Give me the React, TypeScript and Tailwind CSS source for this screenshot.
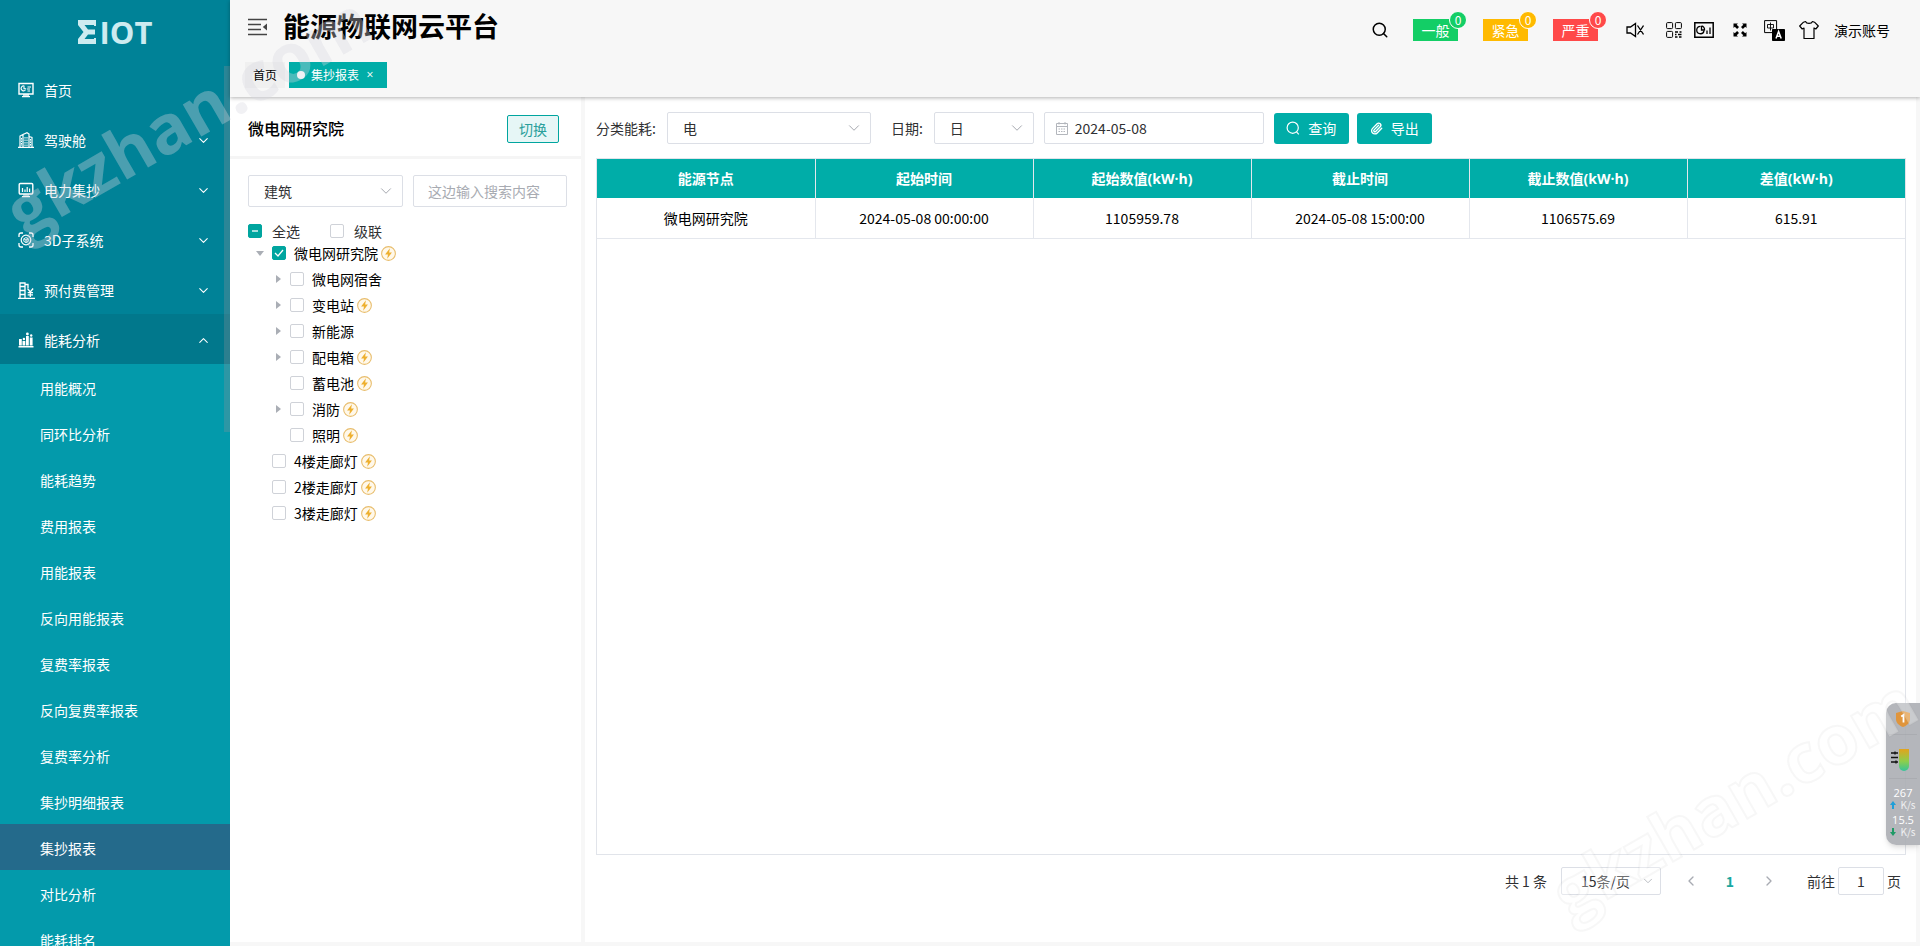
import type { ReactNode } from 'react';
import { ChevronDown, ChevronLeft, ChevronRight, ChevronUp, Paperclip, Search } from 'lucide-react';

const subMenus = [
  '用能概况',
  '同环比分析',
  '能耗趋势',
  '费用报表',
  '用能报表',
  '反向用能报表',
  '复费率报表',
  '反向复费率报表',
  '复费率分析',
  '集抄明细报表',
  '集抄报表',
  '对比分析',
  '能耗排名',
];

const treeNodes = [
  { label: '微电网研究院', level: 0, arrow: 'open', power: true, checked: true },
  { label: '微电网宿舍', level: 1, arrow: 'closed', power: false },
  { label: '变电站', level: 1, arrow: 'closed', power: true },
  { label: '新能源', level: 1, arrow: 'closed', power: false },
  { label: '配电箱', level: 1, arrow: 'closed', power: true },
  { label: '蓄电池', level: 1, power: true },
  { label: '消防', level: 1, arrow: 'closed', power: true },
  { label: '照明', level: 1, power: true },
  { label: '4楼走廊灯', level: 0, power: true },
  { label: '2楼走廊灯', level: 0, power: true },
  { label: '3楼走廊灯', level: 0, power: true },
];

const columns = ['能源节点', '起始时间', '起始数值(kW·h)', '截止时间', '截止数值(kW·h)', '差值(kW·h)'];
const rows = [['微电网研究院', '2024-05-08 00:00:00', '1105959.78', '2024-05-08 15:00:00', '1106575.69', '615.91']];

const HomeIcon = () => (
  <svg className="h-4 w-4" viewBox="0 0 16 16" fill="none" stroke="currentColor">
    <path d="M1 1.5h14v10.5H1z" strokeWidth="1.4" />
    <path d="M6.5 4.2a2.4 2.4 0 1 0 1 3.6M6 4v2.8h2.2M9.5 5H13M9 7h3M9.5 9H12" strokeWidth="1.1" />
    <path d="M5 13h6M4 14.7h8" strokeWidth="1.3" />
  </svg>
);

const BuildingIcon = () => (
  <svg className="h-4 w-4" viewBox="0 0 16 16" fill="none" stroke="currentColor">
    <path d="M0 15.4h16M2 15V4l3-1.5V15M5 2.5 9 .7l2 1.3v13M11 4.5l3 1V15" strokeWidth="1.2" />
    <path d="M7 5v9M9 5v9M12.5 7v7M3.5 6v8" strokeWidth="1" strokeDasharray="1.6 .9" />
  </svg>
);

const MeterIcon = () => (
  <svg className="h-4 w-4" viewBox="0 0 16 16" fill="none" stroke="currentColor">
    <rect x="1.2" y="1.5" width="13.6" height="10.5" rx="1.2" strokeWidth="1.4" />
    <path d="M4.5 10V6M7 10V7.5M9.2 10V5M11.6 10V6.5" strokeWidth="1.2" />
    <path d="M5 13h6M4 14.7h8" strokeWidth="1.2" />
  </svg>
);

const CubeIcon = () => (
  <svg className="h-4 w-4" viewBox="0 0 16 16" fill="none" stroke="currentColor">
    <path d="M5 1H3a2 2 0 0 0-2 2v2M11 1h2a2 2 0 0 1 2 2v2M1 11v2a2 2 0 0 0 2 2h2M15 11v2a2 2 0 0 1-2 2h-2" strokeWidth="1.3" />
    <circle cx="8" cy="8" r="4.8" strokeWidth="1.2" />
    <path d="M8 5.5 10.2 6.8v2.5L8 10.6 5.8 9.300V6.800zM5.800 6.800 8 8l2.200-1.200M8 8v2.600" strokeWidth=".9" />
  </svg>
);

const PrepayIcon = () => (
  <svg className="h-[17px] w-[17px]" viewBox="0 0 17 17" fill="none" stroke="currentColor">
    <path d="M0 16.3h17M2 16V1h5v15M2 4.5h5M2 8.5h5M2 12.5h5M7 2.5h3V6" strokeWidth="1.3" />
    <path d="m9.5 6.5 2.8 3.5 2.8-3.5M12.3 10v5M9.7 10.7H15M9.7 12.9H15" strokeWidth="1.3" />
  </svg>
);

const AnalysisIcon = () => (
  <svg className="h-4 w-4" viewBox="0 0 16 16" fill="currentColor">
    <path d="M1 7h2.8v6.500H1zM4.500 9h2.800v4.500H4.500zM8 4h2.800v9.500H8zM11.800 5.500h2.800v8h-2.800zM.5 14h15v1.500H.5z" />
    <circle cx="9.400" cy="2" r="1.400" />
    <circle cx="5.900" cy="7" r="1.200" />
    <circle cx="13.200" cy="3.500" r="1.200" />
  </svg>
);

const menus = [
  { label: '首页', icon: <HomeIcon /> },
  { label: '驾驶舱', icon: <BuildingIcon />, children: true },
  { label: '电力集抄', icon: <MeterIcon />, children: true },
  { label: '3D子系统', icon: <CubeIcon />, children: true },
  { label: '预付费管理', icon: <PrepayIcon />, children: true },
  { label: '能耗分析', icon: <AnalysisIcon />, children: true, open: true },
];

const Logo = () => (
  <div className="flex h-16 items-center justify-center text-[#cdebf0]">
    <svg className="h-6 w-[18px]" viewBox="0 0 18 24" fill="currentColor">
      <path d="M0 0h18v6h-2V5H6.500L10 9.500h7v5h-7L6.500 19H16v-1h2v6H0v-5l5.500-7L0 5z" />
    </svg>
    <span className="ml-1 font-['Open_Sans',sans-serif] text-[31px] leading-8 font-bold">IOT</span>
  </div>
);

const Sidebar = () => (
  <aside className="relative w-[230px] shrink-0 overflow-hidden bg-[#039aab] text-white">
    <div className="bg-[#008297]">
      <Logo />
      <nav>
        {menus.map((m) => (
          <button
            key={m.label}
            className={`flex h-[50px] w-full items-center pt-0.5 pr-[19px] pl-[18px] text-left ${m.open ? 'bg-[#01788c]' : ''}`}
          >
            <span className="w-[26px]">{m.icon}</span>
            <span className="flex-1">{m.label}</span>
            {m.children && (m.open ? <ChevronUp size={15} strokeWidth={1.7} /> : <ChevronDown size={15} strokeWidth={1.7} />)}
          </button>
        ))}
      </nav>
    </div>
    <ul>
      {subMenus.map((s) => (
        <li key={s}>
          <a href="#" className={`flex h-[46px] items-center pt-0.5 pl-10 ${s === '集抄报表' ? 'bg-[#246a8b]' : ''}`}>
            {s}
          </a>
        </li>
      ))}
    </ul>
    {/* scroll thumb */}
    <div className="absolute top-[66px] right-0 h-[366px] w-1.5 bg-[#909399]/30" />
  </aside>
);

const alarms = [
  { label: '一般', color: 'bg-[#13ce66]' },
  { label: '紧急', color: 'bg-[#ffba00]' },
  { label: '严重', color: 'bg-[#ff4949]' },
];

const HeaderTools = () => (
  <div className="flex items-center pt-1.5 pr-[30px] text-black">
    <button aria-label="搜索">
      <Search size={18} strokeWidth={2} />
    </button>
    <div className="mr-7 ml-6 flex gap-[25px]">
      {alarms.map((a) => (
        <button key={a.label} className={`relative h-[22px] w-[45px] leading-5 text-white ${a.color}`}>
          {a.label}
          <span
            className={`absolute -top-2 -right-[9px] h-[18px] w-[18px] rounded-full border border-white text-xs leading-[15px] ${a.color}`}
          >
            0
          </span>
        </button>
      ))}
    </div>
    <button aria-label="静音" className="mr-[22px]">
      <svg className="h-[18px] w-[18px]" viewBox="0 0 18 18" fill="none" stroke="currentColor" strokeWidth="1.3">
        <path d="M1 6h3.500L9.500 2.500v13L4.500 12H1zM11.500 4.500l6 9M17.500 4.500l-6 9" />
      </svg>
    </button>
    <button aria-label="二维码" className="mr-3">
      <svg className="h-4 w-4" viewBox="0 0 16 16" fill="none" stroke="currentColor">
        <rect x=".6" y=".6" width="6" height="6" rx="1" />
        <rect x="9.400" y=".6" width="6" height="6" rx="1" />
        <rect x=".6" y="9.400" width="6" height="6" rx="1" />
        <path d="M9 10h3M13.500 10h2M9 12.500h1.500M12 12.500h3.500M9 15h2.500M13 15h2.500" strokeWidth="1.400" />
      </svg>
    </button>
    <button aria-label="数据大屏" className="mr-[19px]">
      <svg className="h-4 w-5" viewBox="0 0 20 16" fill="none" stroke="currentColor">
        <path d="M.8.8h18.400v14.400H.8z" strokeWidth="1.500" />
        <path d="M6.500 4.300A3.700 3.700 0 1 0 10 9M7.500 4v4h3a3.500 3.500 0 0 0-3-4M13 12V8.500M16 12V5.500" strokeWidth="1.300" />
      </svg>
    </button>
    <button aria-label="全屏" className="mr-[17px]">
      <svg className="h-3.5 w-3.5" viewBox="0 0 14 14" fill="currentColor">
        <path d="M.5.5H5L3.700 1.800 6 4.100 4.100 6 1.800 3.700.5 5zM13.500.5v4.500l-1.300-1.300L9.900 6 8 4.100l2.300-2.300L9 .5zM.5 13.500V9l1.300 1.300L4.100 8 6 9.900l-2.300 2.300L5 13.500zM13.500 13.500H9l1.300-1.300L8 9.900 9.900 8l2.300 2.300L13.500 9z" />
      </svg>
    </button>
    <button aria-label="语言" className="mr-3.5">
      <svg className="h-[21px] w-[21px]" viewBox="0 0 21 21" fill="none" stroke="currentColor">
        <path d="M.6.6h12v12H.6z" />
        <path d="M3.500 4.500h6v3.500h-6zM6.500 2.500v8" strokeWidth=".9" />
        <path d="M8.500 9.500h12v11h-12z" fill="currentColor" />
        <path d="m12 18.500 2.600-7 2.600 7M13 16.300h3.300" stroke="#fff" strokeWidth="1.500" />
      </svg>
    </button>
    <button aria-label="主题" className="mr-[15px]">
      <svg className="h-5 w-5" viewBox="0 0 20 20" fill="none" stroke="currentColor" strokeWidth="1.200" strokeLinejoin="round">
        <path d="M6.500 1.500C7.500 4 12.500 4 13.500 1.500l2 .7L19.300 6 16.800 9 15 8v10.500H5V8L3.200 9 .7 6l3.800-3.800z" />
      </svg>
    </button>
    <button>演示账号</button>
  </div>
);

const Header = () => (
  <header className="relative z-10 h-[97px] shrink-0 bg-[#f7f7f7] shadow-[0_1px_4px_rgba(0,0,0,0.3)]">
    <div className="flex h-[54px] items-center justify-between pl-[18px]">
      <div className="flex items-center">
        <button aria-label="收起菜单">
          <svg className="h-[18px] w-5" viewBox="0 0 20 18" fill="none" stroke="#444" strokeWidth="1.600">
            <path d="M0 1.500h19M0 6.500h13M0 11.500h13M0 16.500h19" />
            <path d="M19 5.500v7L14.800 9z" fill="#444" stroke="none" />
          </svg>
        </button>
        <h1 className="ml-[15px] pb-0.5 text-[27px] leading-[52px] font-bold text-black">能源物联网云平台</h1>
      </div>
      <HeaderTools />
    </div>
    <div className="flex gap-1 pt-2 pl-[15px] text-xs">
      <a href="#" className="flex h-[26px] items-center bg-[#f0f0f0] px-2 text-black">
        首页
      </a>
      <a href="#" className="flex h-[26px] items-center bg-[#00ada8] pr-1.5 pl-2 text-white">
        <span className="mr-1.5 h-2 w-2 rounded-full bg-white" />
        集抄报表
        <span className="w-[22px] text-center font-['Open_Sans',sans-serif]">×</span>
      </a>
    </div>
  </header>
);

const SelectBox = ({ label, value, className }: { label: string; value: string; className: string }) => (
  <div className={`relative ${className}`}>
    <select
      aria-label={label}
      defaultValue={value}
      className="h-full w-full appearance-none rounded-[2px] border border-[#dcdfe6] bg-white pl-[15px] outline-none"
    >
      <option>{value}</option>
    </select>
    <ChevronDown size={18} strokeWidth={1.3} className="pointer-events-none absolute inset-y-0 right-2 my-auto text-[#a3a6ad]" />
  </div>
);

const CheckItem = ({
  children,
  checked,
  partial,
}: {
  children: ReactNode;
  checked?: boolean;
  partial?: boolean;
}) => (
  <label className="flex items-center">
    <span className="relative mr-2 h-3.5 w-3.5">
      <input
        type="checkbox"
        defaultChecked={checked}
        className="peer block h-3.5 w-3.5 appearance-none rounded-[2px] border border-[#cfd2d8] bg-white checked:border-[#00a59f] checked:bg-[#00a59f]"
      />
      <svg
        className="pointer-events-none absolute inset-0 hidden h-3.5 w-3.5 peer-checked:block"
        viewBox="0 0 14 14"
        fill="none"
        stroke="#fff"
        strokeWidth="1.300"
      >
        <path d={partial ? 'M4 7h6' : 'm3 7 3 3 5-6'} />
      </svg>
    </span>
    {children}
  </label>
);

const PowerIcon = () => (
  <svg className="ml-[3px] h-[15px] w-[15px]" viewBox="0 0 14 14">
    <circle cx="7" cy="7" r="6.400" fill="#fff8ea" stroke="#e8bd6c" />
    <path d="M8.300 2.200 3.800 8h2.700L5.800 12 10.200 6H7.600z" fill="#eeb030" />
  </svg>
);

const TreePanel = () => (
  <section className="w-[351px] shrink-0 bg-white">
    <div className="flex h-[62px] items-center justify-between border-b-[3px] border-[#f5f5f5] pr-[22px] pl-[18px]">
      <h2 className="pt-0.5 text-base font-medium text-black">微电网研究院</h2>
      <button className="mt-1 h-7 w-[52px] rounded-[2px] border border-[#00a59f] bg-[#e6f6f6] text-[#2a9f9b]">切换</button>
    </div>
    <div className="flex gap-2.5 pt-4 pr-3.5 pl-[18px]">
      <SelectBox label="类型" value="建筑" className="h-8 flex-1" />
      <input
        aria-label="搜索"
        placeholder="这边输入搜索内容"
        className="h-8 w-[154px] rounded-[2px] border border-[#dcdfe6] px-3.5 outline-none placeholder:text-[#a8abb2]"
      />
    </div>
    <div className="mt-3.5 flex h-5 items-center gap-[30px] pl-[18px]">
      <CheckItem checked partial>
        <span className="ml-0.5">全选</span>
      </CheckItem>
      <CheckItem>
        <span className="ml-0.5">级联</span>
      </CheckItem>
    </div>
    <ul className="-mt-px pl-6">
      {treeNodes.map((n) => (
        <li key={n.label} className={`flex h-[26px] items-center text-black ${n.level ? 'pl-[18px]' : ''}`}>
          <span className="w-[18px]">
            {n.arrow && (
              <svg className={`ml-0.5 h-2 w-2 ${n.arrow === 'open' ? 'rotate-90' : ''}`} viewBox="0 0 8 8" fill="#aaaeb5">
                <path d="M2 0l5 4-5 4z" />
              </svg>
            )}
          </span>
          <CheckItem checked={n.checked}>
            {n.label}
            {n.power && <PowerIcon />}
          </CheckItem>
        </li>
      ))}
    </ul>
  </section>
);

const FilterBar = () => (
  <div className="flex items-center">
    <span className="mr-[11px]">分类能耗:</span>
    <SelectBox label="分类能耗" value="电" className="h-8 w-[204px]" />
    <span className="mr-[11px] ml-5">日期:</span>
    <SelectBox label="日期" value="日" className="h-8 w-[100px]" />
    <div className="relative mr-2.5 ml-2.5 h-8 w-[220px]">
      <input
        aria-label="选择日期"
        defaultValue="2024-05-08"
        className="h-full w-full rounded-[2px] border border-[#dcdfe6] pl-[30px] outline-none"
      />
      <svg
        className="absolute inset-y-0 left-3 my-auto h-[13px] w-3"
        viewBox="0 0 12 13"
        fill="none"
        stroke="#b3b6bc"
      >
        <path d="M.5 1.500h11v11H.5zM.5 4.500h11M3 0v2.500M9 0v2.500" />
        <path d="M2.500 7h7M2.500 9.500h7" strokeDasharray="1.500 1" />
      </svg>
    </div>
    <button className="mr-2 flex h-[31px] w-[75px] items-center justify-center gap-2 rounded-[3px] bg-[#00ada8] text-white">
      <svg className="h-3.5 w-3.5" viewBox="0 0 14 14" fill="none" stroke="currentColor" strokeWidth="1.200">
        <circle cx="6.700" cy="6.700" r="5.600" />
        <path d="m10.500 10.800 2.300 2.500" />
      </svg>
      查询
    </button>
    <button className="flex h-[31px] w-[75px] items-center justify-center gap-2 rounded-[3px] bg-[#00ada8] text-white">
      <Paperclip size={13} strokeWidth={2.5} />
      导出
    </button>
  </div>
);

const Pagination = () => (
  <div className="flex h-[52px] items-center justify-end pr-[5px]">
    <span className="mr-3.5">共 1 条</span>
    <div className="relative h-7 w-[100px]">
      <select
        aria-label="每页条数"
        className="h-full w-full appearance-none rounded-[2px] border border-[#dcdfe6] bg-white pl-[19px] outline-none"
      >
        <option>15条/页</option>
      </select>
      <ChevronDown size={14} strokeWidth={1.500} className="pointer-events-none absolute inset-y-0 right-1.5 my-auto text-[#b0b3ba]" />
    </div>
    <button aria-label="上一页" className="ml-[22px] text-[#a8abb2]">
      <ChevronLeft size={16} />
    </button>
    <button className="w-[62px] font-bold text-[#1aa79f]">1</button>
    <button aria-label="下一页" className="mr-[30px] text-[#a8abb2]">
      <ChevronRight size={16} />
    </button>
    <label className="flex items-center gap-[3px]">
      前往
      <input defaultValue="1" className="h-7 w-[46px] rounded-[2px] border border-[#dcdfe6] text-center outline-none" />
      页
    </label>
  </div>
);

const ReportPanel = () => (
  <section className="flex flex-1 flex-col bg-white pt-[15px] pr-2.5 pb-[35px] pl-[11px]">
    <FilterBar />
    <div className="mt-3.5 flex-1 border border-[#e1e4ea]">
      <table className="w-full table-fixed border-collapse text-center">
        <thead>
          <tr className="h-[39px] bg-[#00ada8] text-white">
            {columns.map((c) => (
              <th key={c} className="border-r border-[#e4e7ed] font-['Open_Sans','Noto_Sans_CJK_SC',sans-serif] font-bold last:border-r-0">
                {c}
              </th>
            ))}
          </tr>
        </thead>
        <tbody>
          {rows.map((r) => (
            <tr key={r[0]} className="h-10 border-b border-[#e4e7ed] text-black">
              {r.map((v) => (
                <td key={v} className="border-r border-[#e4e7ed] last:border-r-0">
                  {v}
                </td>
              ))}
            </tr>
          ))}
        </tbody>
      </table>
    </div>
    <Pagination />
  </section>
);

const SpeedWidget = () => (
  <div className="absolute top-[703px] right-0 z-20 flex h-[142px] w-[34px] flex-col items-center rounded-l-[10px] bg-[#acaeb4]/90 text-white shadow-md">
    <svg className="mt-2 h-4 w-3.5" viewBox="0 0 14 16">
      <path d="M7 0 14 2v6c0 4-3 6.500-7 8-4-1.500-7-4-7-8V2z" fill="#e0953c" />
      <path d="M5.200 5.500 7.500 4v7.500" fill="none" stroke="#fff" strokeWidth="1.800" />
    </svg>
    <div className="mt-[7px] h-px w-7 bg-black/5" />
    <svg className="mt-3.5 mr-1.5 h-[22px] w-[18px]" viewBox="0 0 18 22">
      <defs>
        <linearGradient id="tube" x1="0" y1="0" x2="0" y2="1">
          <stop offset="0" stopColor="#e3a31c" />
          <stop offset=".55" stopColor="#8fce4a" />
          <stop offset="1" stopColor="#35c49a" />
        </linearGradient>
      </defs>
      <path d="M8 0h10v17a5 5 0 0 1-10 0z" fill="url(#tube)" />
      <path d="M0 4h7M0 8.500h7M0 13h7M4 2.500v3M5 11.500v3" stroke="#111" strokeWidth="1.300" />
    </svg>
    <div className="mt-[7px] h-px w-7 bg-black/5" />
    <span className="mt-[7px] font-['Open_Sans',sans-serif] text-[11px] leading-[13px]">267</span>
    <span className="flex items-center gap-1 text-[10px] leading-[11px] text-white/80">
      <svg className="h-2 w-1.5" viewBox="0 0 6 8">
        <path d="M3 0 6 4H4v4H2V4H0z" fill="#1f9fd8" />
      </svg>
      K/s
    </span>
    <span className="mt-[3px] font-['Open_Sans',sans-serif] text-[11px] leading-[13px]">15.5</span>
    <span className="flex items-center gap-1 text-[10px] leading-[11px] text-white/80">
      <svg className="h-2 w-1.5" viewBox="0 0 6 8">
        <path d="M3 8 0 4h2V0h2v4h2z" fill="#1f9a66" />
      </svg>
      K/s
    </span>
  </div>
);

export default function App() {
  return (
    <div className="relative flex h-screen overflow-hidden bg-[#f7f7f7] font-['Noto_Sans_CJK_SC',sans-serif] text-sm text-[#303133]">
      <Sidebar />
      <main className="flex min-w-0 flex-1 flex-col">
        <Header />
        <div className="flex flex-1 gap-1 pr-1 pb-1">
          <TreePanel />
          <ReportPanel />
        </div>
      </main>
      <SpeedWidget />
      {/* Watermarks */}
      <div className="pointer-events-none absolute top-[178px] left-[28px] z-30 origin-bottom-left -rotate-[30deg] font-['Open_Sans',sans-serif] text-[68px] leading-none font-bold text-[#d8d8e0]/35">
        gkzhan.com
      </div>
      <div className="pointer-events-none absolute top-[860px] left-[1574px] z-30 origin-bottom-left -rotate-[30deg] font-['Open_Sans',sans-serif] text-[68px] leading-none font-bold text-white/30 [-webkit-text-stroke:2px_rgba(150,150,150,0.08)]">
        gkzhan.com
      </div>
    </div>
  );
}
